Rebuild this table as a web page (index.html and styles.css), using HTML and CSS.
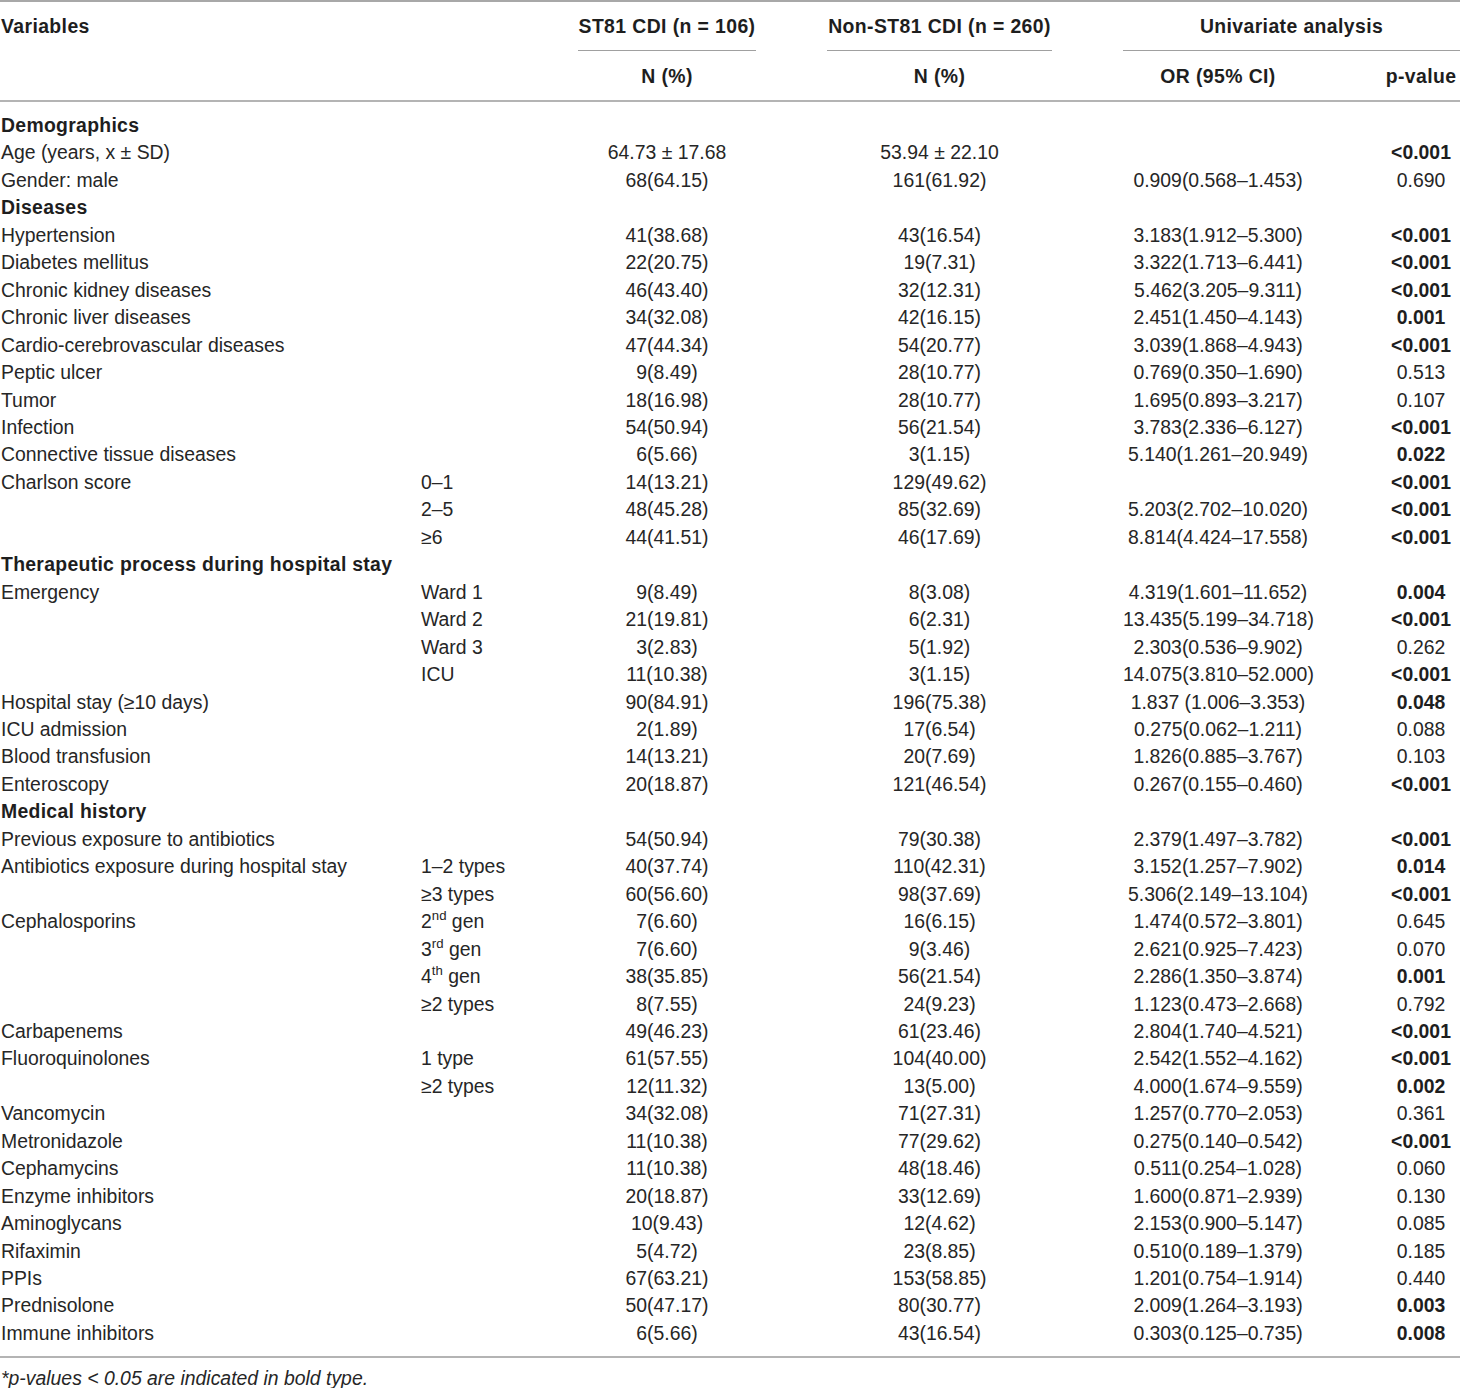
FILE: index.html
```html
<!DOCTYPE html>
<html>
<head>
    <title>ST81 CDI risk factors</title>
    <meta http-equiv="Content-Type" content="text/html; charset=UTF-8">
    <link rel="stylesheet" href="styles.css">
</head>
<body>
    <table class="risk">
        <colgroup>
            <col class="c-var">
            <col class="c-sub">
            <col class="c-st81">
            <col class="c-non">
            <col class="c-or">
            <col class="c-p">
        </colgroup>
        <thead>
            <tr class="head1">
                <th class="var" colspan="2">Variables</th>
                <th class="n"><div class="grp">ST81 CDI (n = 106)</div></th>
                <th class="n"><div class="grp">Non-ST81 CDI (n = 260)</div></th>
                <th class="uni" colspan="2"><div class="grp">Univariate analysis</div></th>
            </tr>
            <tr class="head2">
                <th colspan="2"></th>
                <th class="n">N (%)</th>
                <th class="n">N (%)</th>
                <th class="or">OR (95% CI)</th>
                <th class="p">p-value</th>
            </tr>
        </thead>
        <tbody>
            <tr class="first"><td class="cat" colspan="6">Demographics</td></tr>
            <tr><td>Age (years, x ± SD)</td><td></td><td class="n">64.73 ± 17.68</td><td class="n">53.94 ± 22.10</td><td class="or"></td><td class="p sig">&lt;0.001</td></tr>
            <tr><td>Gender: male</td><td></td><td class="n">68(64.15)</td><td class="n">161(61.92)</td><td class="or">0.909(0.568–1.453)</td><td class="p">0.690</td></tr>
            <tr><td class="cat" colspan="6">Diseases</td></tr>
            <tr><td>Hypertension</td><td></td><td class="n">41(38.68)</td><td class="n">43(16.54)</td><td class="or">3.183(1.912–5.300)</td><td class="p sig">&lt;0.001</td></tr>
            <tr><td>Diabetes mellitus</td><td></td><td class="n">22(20.75)</td><td class="n">19(7.31)</td><td class="or">3.322(1.713–6.441)</td><td class="p sig">&lt;0.001</td></tr>
            <tr><td>Chronic kidney diseases</td><td></td><td class="n">46(43.40)</td><td class="n">32(12.31)</td><td class="or">5.462(3.205–9.311)</td><td class="p sig">&lt;0.001</td></tr>
            <tr><td>Chronic liver diseases</td><td></td><td class="n">34(32.08)</td><td class="n">42(16.15)</td><td class="or">2.451(1.450–4.143)</td><td class="p sig">0.001</td></tr>
            <tr><td>Cardio-cerebrovascular diseases</td><td></td><td class="n">47(44.34)</td><td class="n">54(20.77)</td><td class="or">3.039(1.868–4.943)</td><td class="p sig">&lt;0.001</td></tr>
            <tr><td>Peptic ulcer</td><td></td><td class="n">9(8.49)</td><td class="n">28(10.77)</td><td class="or">0.769(0.350–1.690)</td><td class="p">0.513</td></tr>
            <tr><td>Tumor</td><td></td><td class="n">18(16.98)</td><td class="n">28(10.77)</td><td class="or">1.695(0.893–3.217)</td><td class="p">0.107</td></tr>
            <tr><td>Infection</td><td></td><td class="n">54(50.94)</td><td class="n">56(21.54)</td><td class="or">3.783(2.336–6.127)</td><td class="p sig">&lt;0.001</td></tr>
            <tr><td>Connective tissue diseases</td><td></td><td class="n">6(5.66)</td><td class="n">3(1.15)</td><td class="or">5.140(1.261–20.949)</td><td class="p sig">0.022</td></tr>
            <tr><td>Charlson score</td><td>0–1</td><td class="n">14(13.21)</td><td class="n">129(49.62)</td><td class="or"></td><td class="p sig">&lt;0.001</td></tr>
            <tr><td></td><td>2–5</td><td class="n">48(45.28)</td><td class="n">85(32.69)</td><td class="or">5.203(2.702–10.020)</td><td class="p sig">&lt;0.001</td></tr>
            <tr><td></td><td>≥6</td><td class="n">44(41.51)</td><td class="n">46(17.69)</td><td class="or">8.814(4.424–17.558)</td><td class="p sig">&lt;0.001</td></tr>
            <tr><td class="cat" colspan="6">Therapeutic process during hospital stay</td></tr>
            <tr><td>Emergency</td><td>Ward 1</td><td class="n">9(8.49)</td><td class="n">8(3.08)</td><td class="or">4.319(1.601–11.652)</td><td class="p sig">0.004</td></tr>
            <tr><td></td><td>Ward 2</td><td class="n">21(19.81)</td><td class="n">6(2.31)</td><td class="or">13.435(5.199–34.718)</td><td class="p sig">&lt;0.001</td></tr>
            <tr><td></td><td>Ward 3</td><td class="n">3(2.83)</td><td class="n">5(1.92)</td><td class="or">2.303(0.536–9.902)</td><td class="p">0.262</td></tr>
            <tr><td></td><td>ICU</td><td class="n">11(10.38)</td><td class="n">3(1.15)</td><td class="or">14.075(3.810–52.000)</td><td class="p sig">&lt;0.001</td></tr>
            <tr><td>Hospital stay (≥10 days)</td><td></td><td class="n">90(84.91)</td><td class="n">196(75.38)</td><td class="or">1.837 (1.006–3.353)</td><td class="p sig">0.048</td></tr>
            <tr><td>ICU admission</td><td></td><td class="n">2(1.89)</td><td class="n">17(6.54)</td><td class="or">0.275(0.062–1.211)</td><td class="p">0.088</td></tr>
            <tr><td>Blood transfusion</td><td></td><td class="n">14(13.21)</td><td class="n">20(7.69)</td><td class="or">1.826(0.885–3.767)</td><td class="p">0.103</td></tr>
            <tr><td>Enteroscopy</td><td></td><td class="n">20(18.87)</td><td class="n">121(46.54)</td><td class="or">0.267(0.155–0.460)</td><td class="p sig">&lt;0.001</td></tr>
            <tr><td class="cat" colspan="6">Medical history</td></tr>
            <tr><td>Previous exposure to antibiotics</td><td></td><td class="n">54(50.94)</td><td class="n">79(30.38)</td><td class="or">2.379(1.497–3.782)</td><td class="p sig">&lt;0.001</td></tr>
            <tr><td>Antibiotics exposure during hospital stay</td><td>1–2 types</td><td class="n">40(37.74)</td><td class="n">110(42.31)</td><td class="or">3.152(1.257–7.902)</td><td class="p sig">0.014</td></tr>
            <tr><td></td><td>≥3 types</td><td class="n">60(56.60)</td><td class="n">98(37.69)</td><td class="or">5.306(2.149–13.104)</td><td class="p sig">&lt;0.001</td></tr>
            <tr><td>Cephalosporins</td><td>2<sup>nd</sup> gen</td><td class="n">7(6.60)</td><td class="n">16(6.15)</td><td class="or">1.474(0.572–3.801)</td><td class="p">0.645</td></tr>
            <tr><td></td><td>3<sup>rd</sup> gen</td><td class="n">7(6.60)</td><td class="n">9(3.46)</td><td class="or">2.621(0.925–7.423)</td><td class="p">0.070</td></tr>
            <tr><td></td><td>4<sup>th</sup> gen</td><td class="n">38(35.85)</td><td class="n">56(21.54)</td><td class="or">2.286(1.350–3.874)</td><td class="p sig">0.001</td></tr>
            <tr><td></td><td>≥2 types</td><td class="n">8(7.55)</td><td class="n">24(9.23)</td><td class="or">1.123(0.473–2.668)</td><td class="p">0.792</td></tr>
            <tr><td>Carbapenems</td><td></td><td class="n">49(46.23)</td><td class="n">61(23.46)</td><td class="or">2.804(1.740–4.521)</td><td class="p sig">&lt;0.001</td></tr>
            <tr><td>Fluoroquinolones</td><td>1 type</td><td class="n">61(57.55)</td><td class="n">104(40.00)</td><td class="or">2.542(1.552–4.162)</td><td class="p sig">&lt;0.001</td></tr>
            <tr><td></td><td>≥2 types</td><td class="n">12(11.32)</td><td class="n">13(5.00)</td><td class="or">4.000(1.674–9.559)</td><td class="p sig">0.002</td></tr>
            <tr><td>Vancomycin</td><td></td><td class="n">34(32.08)</td><td class="n">71(27.31)</td><td class="or">1.257(0.770–2.053)</td><td class="p">0.361</td></tr>
            <tr><td>Metronidazole</td><td></td><td class="n">11(10.38)</td><td class="n">77(29.62)</td><td class="or">0.275(0.140–0.542)</td><td class="p sig">&lt;0.001</td></tr>
            <tr><td>Cephamycins</td><td></td><td class="n">11(10.38)</td><td class="n">48(18.46)</td><td class="or">0.511(0.254–1.028)</td><td class="p">0.060</td></tr>
            <tr><td>Enzyme inhibitors</td><td></td><td class="n">20(18.87)</td><td class="n">33(12.69)</td><td class="or">1.600(0.871–2.939)</td><td class="p">0.130</td></tr>
            <tr><td>Aminoglycans</td><td></td><td class="n">10(9.43)</td><td class="n">12(4.62)</td><td class="or">2.153(0.900–5.147)</td><td class="p">0.085</td></tr>
            <tr><td>Rifaximin</td><td></td><td class="n">5(4.72)</td><td class="n">23(8.85)</td><td class="or">0.510(0.189–1.379)</td><td class="p">0.185</td></tr>
            <tr><td>PPIs</td><td></td><td class="n">67(63.21)</td><td class="n">153(58.85)</td><td class="or">1.201(0.754–1.914)</td><td class="p">0.440</td></tr>
            <tr><td>Prednisolone</td><td></td><td class="n">50(47.17)</td><td class="n">80(30.77)</td><td class="or">2.009(1.264–3.193)</td><td class="p sig">0.003</td></tr>
            <tr class="last"><td>Immune inhibitors</td><td></td><td class="n">6(5.66)</td><td class="n">43(16.54)</td><td class="or">0.303(0.125–0.735)</td><td class="p sig">0.008</td></tr>
        </tbody>
    </table>
    <p class="note">*p-values &lt; 0.05 are indicated in bold type.</p>
</body>
</html>
```

FILE: styles.css
```css
body {
    margin: 0;
    font-family: "Liberation Sans", Arial, sans-serif;
    font-size: 19.4px;
    color: #262626;
    background: #fff;
}

.risk {
    width: 1460px;
    table-layout: fixed;
    border-collapse: separate;
    border-spacing: 0;
}

.c-var { width: 421px; }
.c-sub { width: 157px; }
.c-st81 { width: 249px; }
.c-non { width: 296px; }
.c-or { width: 259px; }
.c-p { width: 78px; }

th, td {
    padding: 0;
    white-space: nowrap;
    text-align: left;
    font-weight: normal;
}

th {
    font-weight: bold;
    color: #1e1e1e;
    letter-spacing: 0.4px;
}

.head1 th {
    border-top: 2px solid #a8a8a8;
    line-height: 48px;
    vertical-align: top;
}
.head1 .var {
    padding-left: 1px;
}
.head2 th {
    line-height: 48px;
    padding-top: 1px;
    border-bottom: 2px solid #b4b4b4;
}

.grp {
    text-align: center;
    border-bottom: 1px solid #a0a0a0;
}

.n {
    text-align: center;
    padding-right: 71px;
}
.uni {
    padding-right: 0;
}
.or {
    text-align: center;
    padding-right: 69px;
}
.p {
    text-align: center;
}

tbody td {
    line-height: 27.45px;
}
tbody td:first-child {
    padding-left: 1px;
}
.first td {
    padding-top: 10px;
}
.last td {
    padding-bottom: 9px;
    border-bottom: 2px solid #b4b4b4;
}

.cat {
    font-weight: bold;
    color: #1e1e1e;
    letter-spacing: 0.3px;
}
.sig {
    font-weight: bold;
    color: #1e1e1e;
}

sup {
    font-size: 68%;
    line-height: 0;
    vertical-align: 0.6em;
}

.note {
    margin: 10px 0 0 1px;
    line-height: 20px;
    font-style: italic;
}
```
